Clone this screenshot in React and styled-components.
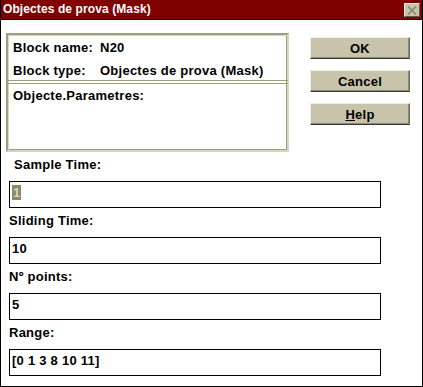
import React from 'react';
import styled, { createGlobalStyle } from 'styled-components';

const FACE = '#c8c4ac';
const ETCH = '#a09c80';
const SELECT = '#8c8868';

const Global = createGlobalStyle`
    html, body {
        margin: 0;
        padding: 0;
        background: #ffffff;
    }
    body {
        font-family: "Liberation Sans", Arial, sans-serif;
    }
`

const fields = [
    { label: 'Sample Time:', value: '1', selected: true, indent: 5 },
    { label: 'Sliding Time:', value: '10' },
    { label: 'Nº points:', value: '5' },
    { label: 'Range:', value: '[0 1 3 8 10 11]' },
];

export default () => {
    return (
        <Window>
            <Global />
            <TitleBar>
                <Title>Objectes de prova (Mask)</Title>
                <CloseButton>
                    <svg width="10" height="9" viewBox="0 0 10 9">
                        <path d="M1 0.5 L9 8.5 M9 0.5 L1 8.5" stroke="#8c8870" strokeWidth="1.6" />
                    </svg>
                </CloseButton>
            </TitleBar>
            <Body>
                <TopRow>
                    <BlockBox>
                        <BlockInfo>
                            <InfoKey>Block name:</InfoKey>
                            <InfoLine>N20</InfoLine>
                            <InfoKey>Block type:</InfoKey>
                            <InfoLine>Objectes de prova (Mask)</InfoLine>
                        </BlockInfo>
                        <Divider />
                        <Params>
                            <InfoLine>Objecte.Parametres:</InfoLine>
                        </Params>
                    </BlockBox>
                    <Buttons>
                        <Button>OK</Button>
                        <Button>Cancel</Button>
                        <Button><u>H</u>elp</Button>
                    </Buttons>
                </TopRow>
                {fields.map((f) => (
                    <Field key={f.label}>
                        <Label $indent={f.indent || 0}>{f.label}</Label>
                        <Input>
                            {f.selected ? <Selected>{f.value}</Selected> : f.value}
                        </Input>
                    </Field>
                ))}
            </Body>
        </Window>
    );
}

const Window = styled.div`
    width: 423px;
    height: 387px;
    box-sizing: border-box;
    border: 1px solid #000;
    border-top: none;
    display: flex;
    flex-direction: column;
    background: #fff;
`
const TitleBar = styled.div`
    height: 19px;
    background: #800000;
    border-bottom: 1px solid #000;
    display: flex;
    align-items: center;
    justify-content: space-between;
    padding: 0 2px 0 2px;
`
const Title = styled.div`
    color: #fff;
    font-weight: bold;
    font-size: 12px;
    letter-spacing: 0.1px;
    padding-bottom: 1px;
`
const CloseButton = styled.div`
    width: 16px;
    height: 14px;
    box-sizing: border-box;
    background: ${FACE};
    border: 1px solid;
    border-color: #eeeee4 #5c5a48 #5c5a48 #eeeee4;
    display: flex;
    align-items: center;
    justify-content: center;
    margin-top: 1px;
`
const Body = styled.div`
    flex: 1;
    padding: 13px 0 0 5px;
    font-weight: bold;
    font-size: 13px;
    letter-spacing: 0.25px;
    color: #000;
`
const TopRow = styled.div`
    display: flex;
    gap: 21px;
`
const BlockBox = styled.div`
    width: 283px;
    height: 119px;
    box-sizing: border-box;
    border: 2px solid ${ETCH};
    border-color: ${ETCH} #d8d4c4 #d8d4c4 ${ETCH};
    box-shadow: inset 1px 1px 0 #d8d4c4, inset -1px -1px 0 ${ETCH};
    display: flex;
    flex-direction: column;
`
const BlockInfo = styled.div`
    height: 45px;
    box-sizing: border-box;
    padding: 5px 0 0 5px;
    display: grid;
    grid-template-columns: 87px 1fr;
    row-gap: 7px;
    align-content: start;
`
const InfoLine = styled.div`
    line-height: 16px;
    white-space: pre;
`
const InfoKey = styled(InfoLine)``
const Divider = styled.div`
    height: 2px;
    border-top: 1px solid ${ETCH};
    border-bottom: 1px solid ${ETCH};
    margin: 0 -1px;
`
const Params = styled.div`
    padding: 4px 0 0 5px;
`
const Buttons = styled.div`
    display: flex;
    flex-direction: column;
    gap: 11px;
    padding-top: 4px;
`
const Button = styled.div`
    width: 100px;
    height: 22px;
    box-sizing: border-box;
    background: ${FACE};
    border: 1px solid;
    border-color: #f0eee4 #6c6a58 #3c3a30 #f0eee4;
    box-shadow: inset -1px -1px 0 #8c8a74;
    display: flex;
    align-items: center;
    justify-content: center;
    font-size: 13px;
    font-weight: bold;
`
const Field = styled.div`
    display: flex;
    flex-direction: column;
    padding: 5px 0 0 3px;
`
const Label = styled.div`
    line-height: 16px;
    height: 16px;
    margin-bottom: 8px;
    padding-left: ${(p) => p.$indent}px;
`
const Input = styled.div`
    width: 372px;
    height: 27px;
    box-sizing: border-box;
    border: 1px solid #000;
    padding: 3px 0 0 2px;
    line-height: 16px;
`
const Selected = styled.span`
    background: ${SELECT};
    color: #d8d4c0;
    padding: 0 1px;
`
